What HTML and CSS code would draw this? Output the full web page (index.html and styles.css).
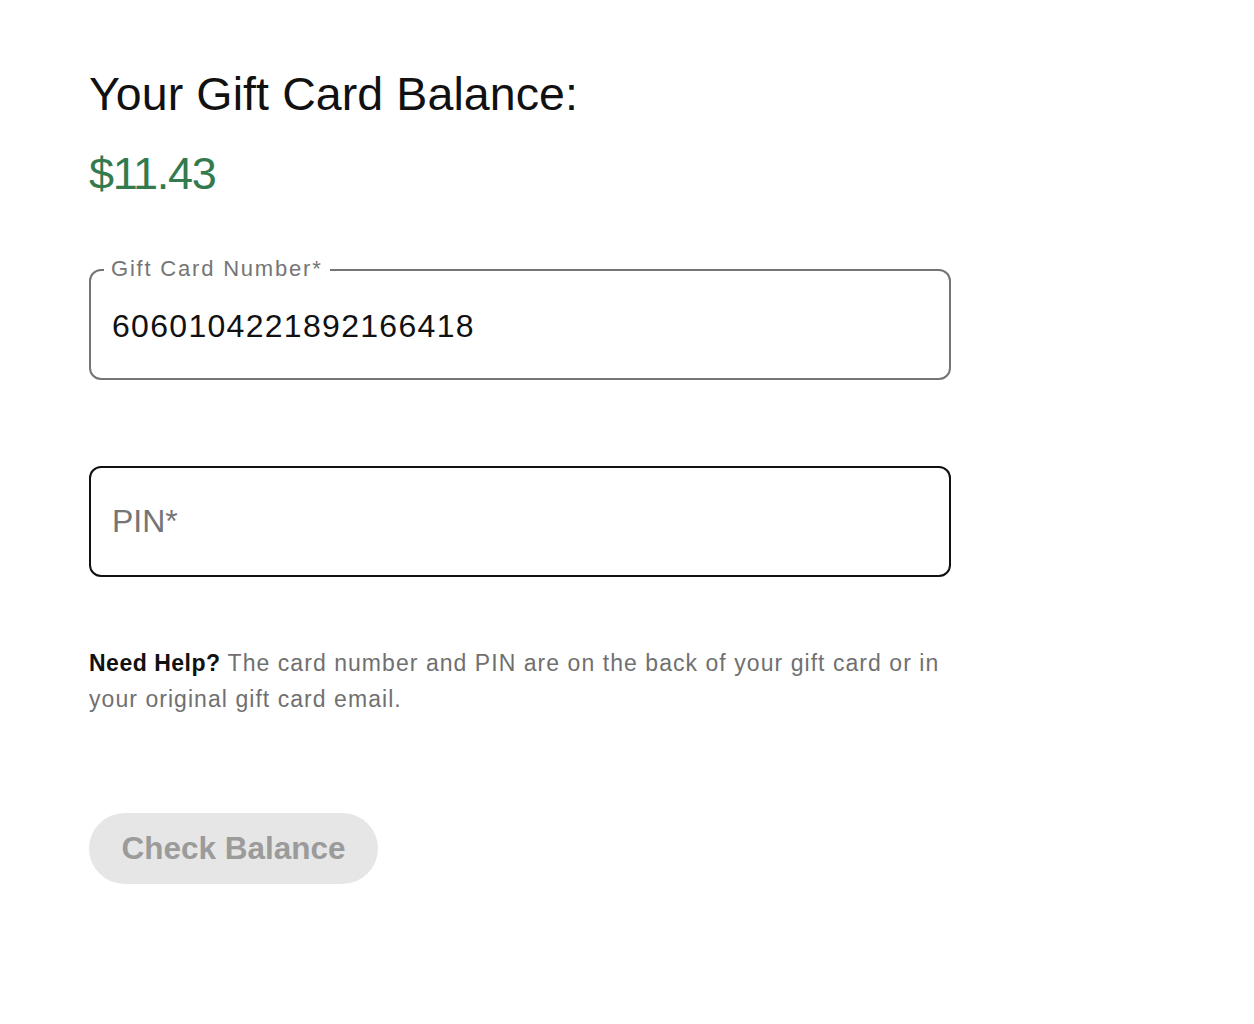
FILE: index.html
```html
<!DOCTYPE html>
<html lang="en">
<head>
<meta charset="utf-8">
<title>Gift Card Balance</title>
<link rel="stylesheet" href="styles.css">
</head>
<body>
<main class="page">
  <h1 class="title">Your Gift Card Balance:</h1>
  <p class="balance">$11.43</p>
  <div class="field field-number">
    <label class="field-label" for="card">Gift Card Number*</label>
    <input class="field-input" id="card" type="text" value="6060104221892166418">
  </div>
  <div class="field field-pin">
    <input class="field-input field-input-active" id="pin" type="text" placeholder="PIN*">
  </div>
  <p class="help"><strong class="help-strong">Need Help?</strong> The card number and PIN are on the back of your gift card or in your original gift card email.</p>
  <button class="check-btn" type="button">Check Balance</button>
</main>
</body>
</html>
```

FILE: styles.css
```css
html, body {
  margin: 0;
  padding: 0;
  background: #ffffff;
}

body {
  font-family: "Liberation Sans", Arial, sans-serif;
  color: #111111;
}

.page {
  width: 862px;
  padding: 66px 0 0 89px;
  display: flex;
  flex-direction: column;
  align-items: flex-start;
}

.title {
  margin: 0;
  font-size: 46.5px;
  line-height: 56px;
  font-weight: 400;
  letter-spacing: 0.1px;
  color: #111111;
}

.balance {
  margin: 27px 0 0;
  font-size: 45px;
  line-height: 50px;
  letter-spacing: -1.3px;
  color: #347a4f;
}

.field {
  position: relative;
  width: 100%;
}

.field-number {
  margin-top: 70px;
}

.field-pin {
  margin-top: 86px;
}

.field-label {
  position: absolute;
  left: 15px;
  top: -12px;
  padding: 0 7px;
  background: #ffffff;
  font-size: 22px;
  line-height: 24px;
  letter-spacing: 1.8px;
  color: #757575;
}

.field-input {
  display: block;
  box-sizing: border-box;
  width: 100%;
  height: 111px;
  margin: 0;
  padding: 4px 21px 0;
  border: 2px solid #757575;
  border-radius: 12px;
  background: #ffffff;
  font-family: "Liberation Sans", Arial, sans-serif;
  font-size: 32px;
  letter-spacing: 1.3px;
  color: #111111;
  outline: none;
}

.field-input-active {
  border-color: #111111;
  padding-top: 0;
  letter-spacing: 0;
}

.field-input::placeholder {
  color: #757575;
  opacity: 1;
}

.help {
  margin: 68px 0 0;
  font-size: 23px;
  line-height: 36px;
  letter-spacing: 1.05px;
  color: #707070;
}

.help-strong {
  font-weight: 700;
  letter-spacing: 0.5px;
  color: #111111;
}

.check-btn {
  margin-top: 96px;
  box-sizing: border-box;
  width: 289px;
  height: 71px;
  padding: 0;
  border: none;
  border-radius: 36px;
  background: #e6e6e6;
  font-family: "Liberation Sans", Arial, sans-serif;
  font-size: 31.5px;
  font-weight: 700;
  color: #9b9b9b;
}
```
